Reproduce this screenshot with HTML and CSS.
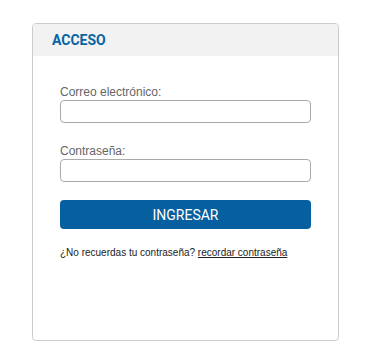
FILE: index.html
```html
<!DOCTYPE html>
<html lang="es">
<head>
<meta charset="utf-8">
<link rel="stylesheet" href="styles.css">
</head>
<body>
<div class="card">
  <div class="card-head"><h2 class="title">ACCESO</h2></div>
  <form class="card-body">
    <label class="field">
      <span class="label">Correo electrónico:</span>
      <input class="input" type="text">
    </label>
    <label class="field">
      <span class="label">Contraseña:</span>
      <input class="input" type="password">
    </label>
    <button class="btn" type="button">INGRESAR</button>
    <p class="hint">¿No recuerdas tu contraseña? <a class="link" href="#">recordar contraseña</a></p>
  </form>
</div>
</body>
</html>
```
FILE: styles.css
```css
html, body { margin: 0; padding: 0; background: #fff; }
body {
  padding: 23px 0 0 32px;
  font-family: "Liberation Sans", Arial, sans-serif;
}
.card {
  width: 305px;
  height: 316px;
  border: 1px solid #cccccc;
  border-radius: 4px;
  overflow: hidden;
}
.card-head {
  background: #f2f2f2;
  height: 32px;
  display: flex;
  align-items: center;
  padding-left: 19px;
}
.title {
  margin: 0;
  font-family: Roboto, "Liberation Sans", sans-serif;
  font-size: 14px;
  font-weight: 700;
  color: #0a63a3;
}
.card-body {
  padding: 29px 27px 0 27px;
  display: flex;
  flex-direction: column;
}
.field { display: flex; flex-direction: column; margin-bottom: 21px; }
.field + .field { margin-bottom: 18px; }
.label {
  font-size: 12px;
  line-height: 14px;
  color: #666;
  margin-bottom: 1px;
}
.input {
  box-sizing: border-box;
  height: 23px;
  border: 1px solid #aaaaaa;
  border-radius: 4px;
  margin: 0;
  padding: 0 6px;
  background: #fff;
}
.btn {
  height: 29px;
  border: none;
  border-radius: 4px;
  background: #065f9f;
  color: #fff;
  font-family: Roboto, "Liberation Sans", Arial, sans-serif;
  font-size: 14px;
  margin: 0;
  padding: 0;
}
.hint {
  margin: 18px 0 0 0;
  font-size: 10px;
  line-height: 12px;
  color: #222;
}
.link { color: #222; text-decoration: underline; }
```
